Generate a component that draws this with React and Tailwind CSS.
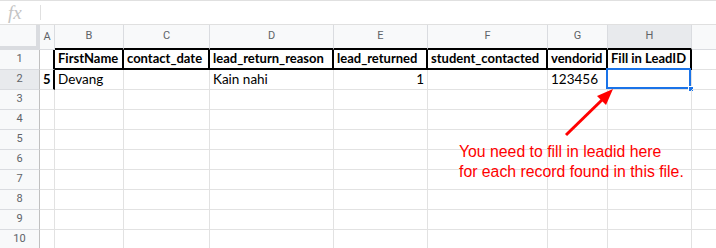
import React from 'react';

const cols = [
  { key: 'A', w: 'w-[15px]' },
  { key: 'B', w: 'w-[69px]' },
  { key: 'C', w: 'w-[86px]' },
  { key: 'D', w: 'w-[124px]' },
  { key: 'E', w: 'w-[94px]' },
  { key: 'F', w: 'w-[120px]' },
  { key: 'G', w: 'w-[60px]' },
  { key: 'H', w: 'w-[84px]' },
  { key: 'I', w: 'w-[100px]', hide: true },
];

const data = {
  1: {
    B: 'FirstName',
    C: 'contact_date',
    D: 'lead_return_reason',
    E: 'lead_returned',
    F: 'student_contacted',
    G: 'vendorid',
    H: 'Fill in LeadID',
  },
  2: { A: '5', B: 'Devang', D: 'Kain nahi', E: '1', G: '123456' },
};

const boxed = ['B', 'C', 'D', 'E', 'F', 'G', 'H'];

function ColHeader({ col }) {
  const black = boxed.includes(col.key);
  const selected = col.key === 'H';
  return (
    <div
      className={`${col.w} shrink-0 h-[25px] flex items-center justify-center border-r border-r-[#dadce0] text-[11px] text-[#5f6368] ${
        black ? 'border-b-2 border-b-black' : 'border-b border-b-[#dadce0]'
      } ${selected ? 'bg-[#e8eaed]' : 'bg-[#f8f9fa]'}`}
      style={{ fontFamily: 'Roboto, sans-serif' }}
    >
      {col.hide ? '' : col.key}
    </div>
  );
}

function Cell({ row, col }) {
  const text = data[row]?.[col.key];
  const inBox = row === 1 && boxed.includes(col.key);
  const rightBlack = inBox || (col.key === 'A' && (row === 1 || row === 2));
  const bottomBlack = inBox;
  const bold = row === 1 || (row === 2 && col.key === 'A');
  const right = row === 2 && col.key === 'E';
  const selected = row === 2 && col.key === 'H';

  return (
    <div
      className={`${col.w} shrink-0 h-[20px] relative flex items-center px-[3px] whitespace-nowrap text-black ${
        rightBlack ? 'border-r-2 border-r-black' : 'border-r border-r-[#e2e2e2]'
      } ${bottomBlack ? 'border-b-2 border-b-black' : 'border-b border-b-[#e2e2e2]'} ${
        bold ? 'font-bold text-[13px]' : 'font-normal text-[13.5px]'
      } ${right ? 'justify-end' : 'justify-start'}`}
      style={{ fontFamily: 'Lato, sans-serif' }}
    >
      {text}
      {selected && (
        <div className="absolute -top-[2px] -left-[2px] right-0 bottom-0 border-2 border-[#1a73e8]">
          <div className="absolute -right-[5px] -bottom-[5px] w-[6px] h-[6px] bg-[#1a73e8] border border-white" />
        </div>
      )}
    </div>
  );
}

export default function App() {
  const rows = [1, 2, 3, 4, 5, 6, 7, 8, 9, 10];
  return (
    <div className="relative w-[716px] h-[248px] overflow-hidden bg-white">
      {/* Formula bar */}
      <div className="h-[25px] flex items-center border-t border-b border-[#e0e0e0]">
        <span
          className="w-[40px] pl-[8px] italic text-[19px] leading-none text-[#c4c4c4]"
          style={{ fontFamily: '"Liberation Serif", serif' }}
        >
          fx
        </span>
        <div className="w-px h-[15px] bg-[#e0e0e0]" />
      </div>

      {/* Column headers */}
      <div className="flex">
        <div className="w-[40px] shrink-0 h-[25px] bg-[#f8f9fa] border-r-4 border-b-4 border-[#dadce0]" />
        {cols.map((c) => (
          <ColHeader key={c.key} col={c} />
        ))}
      </div>

      {/* Rows */}
      {rows.map((r) => (
        <div key={r} className="flex">
          <div
            className={`w-[40px] shrink-0 h-[20px] flex items-center justify-center border-r border-r-[#c0c0c0] border-b border-b-[#dadce0] text-[11px] text-[#5f6368] ${
              r === 2 ? 'bg-[#e8eaed]' : 'bg-[#f8f9fa]'
            }`}
            style={{ fontFamily: 'Roboto, sans-serif' }}
          >
            {r}
          </div>
          {cols.map((c) => (
            <Cell key={c.key} row={r} col={c} />
          ))}
        </div>
      ))}

      {/* Annotation arrow */}
      <svg className="absolute left-0 top-0" width="716" height="248">
        <line x1="566" y1="135" x2="604" y2="98" stroke="#ff0000" strokeWidth="3" />
        <polygon points="613,89 606,105 597,96" fill="#ff0000" />
      </svg>

      <div
        className="absolute left-[459px] top-[142px] text-[15.8px] leading-[20px] text-[#ff0000]"
        style={{ fontFamily: '"Liberation Sans", Arial, sans-serif' }}
      >
        You need to fill in leadid here
        <br />
        for each record found in this file.
      </div>
    </div>
  );
}
